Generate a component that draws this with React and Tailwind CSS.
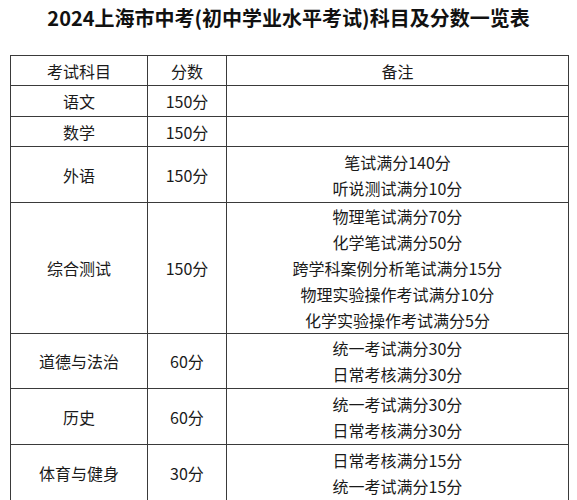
const ROWS = [
  { subject: "语文", score: "150分", notes: [], h: "h-[31px]" },
  { subject: "数学", score: "150分", notes: [], h: "h-[30px]" },
  { subject: "外语", score: "150分", notes: ["笔试满分140分", "听说测试满分10分"], h: "h-[56px]" },
  {
    subject: "综合测试",
    score: "150分",
    notes: [
      "物理笔试满分70分",
      "化学笔试满分50分",
      "跨学科案例分析笔试满分15分",
      "物理实验操作考试满分10分",
      "化学实验操作考试满分5分",
    ],
    h: "h-[131px]",
  },
  { subject: "道德与法治", score: "60分", notes: ["统一考试满分30分", "日常考核满分30分"], h: "h-[55px]" },
  { subject: "历史", score: "60分", notes: ["统一考试满分30分", "日常考核满分30分"], h: "h-[56px]" },
  { subject: "体育与健身", score: "30分", notes: ["日常考核满分15分", "统一考试满分15分"], h: "h-[56px]" },
];

export default function App() {
  return (
    <div
      className="h-[500px] w-[577px] overflow-hidden bg-white text-[#1a1a1a]"
      style={{ fontFamily: '"Noto Sans CJK SC", "Noto Sans", sans-serif' }}
    >
      <h1 className="pt-[5px] text-center text-[20px] font-bold leading-[26px] text-[#111]">
        2024上海市中考(初中学业水平考试)科目及分数一览表
      </h1>

      <table className="ml-[10px] mt-[24px] w-[559px] table-fixed border-collapse text-center text-[16px] leading-[26px]">
        <colgroup>
          <col className="w-[137px]" />
          <col className="w-[79px]" />
          <col />
        </colgroup>
        <thead>
          <tr className="h-[30px]">
            <th className="border border-[#3a3a3a] p-0 font-normal">考试科目</th>
            <th className="border border-[#3a3a3a] p-0 font-normal">分数</th>
            <th className="border border-[#3a3a3a] p-0 font-normal">备注</th>
          </tr>
        </thead>
        <tbody>
          {ROWS.map((row) => (
            <tr key={row.subject} className={row.h}>
              <td className="border border-[#3a3a3a] p-0">{row.subject}</td>
              <td className="border border-[#3a3a3a] p-0">{row.score}</td>
              <td className="border border-[#3a3a3a] p-0">
                {row.notes.map((n) => (
                  <div key={n}>{n}</div>
                ))}
              </td>
            </tr>
          ))}
        </tbody>
      </table>
    </div>
  );
}
